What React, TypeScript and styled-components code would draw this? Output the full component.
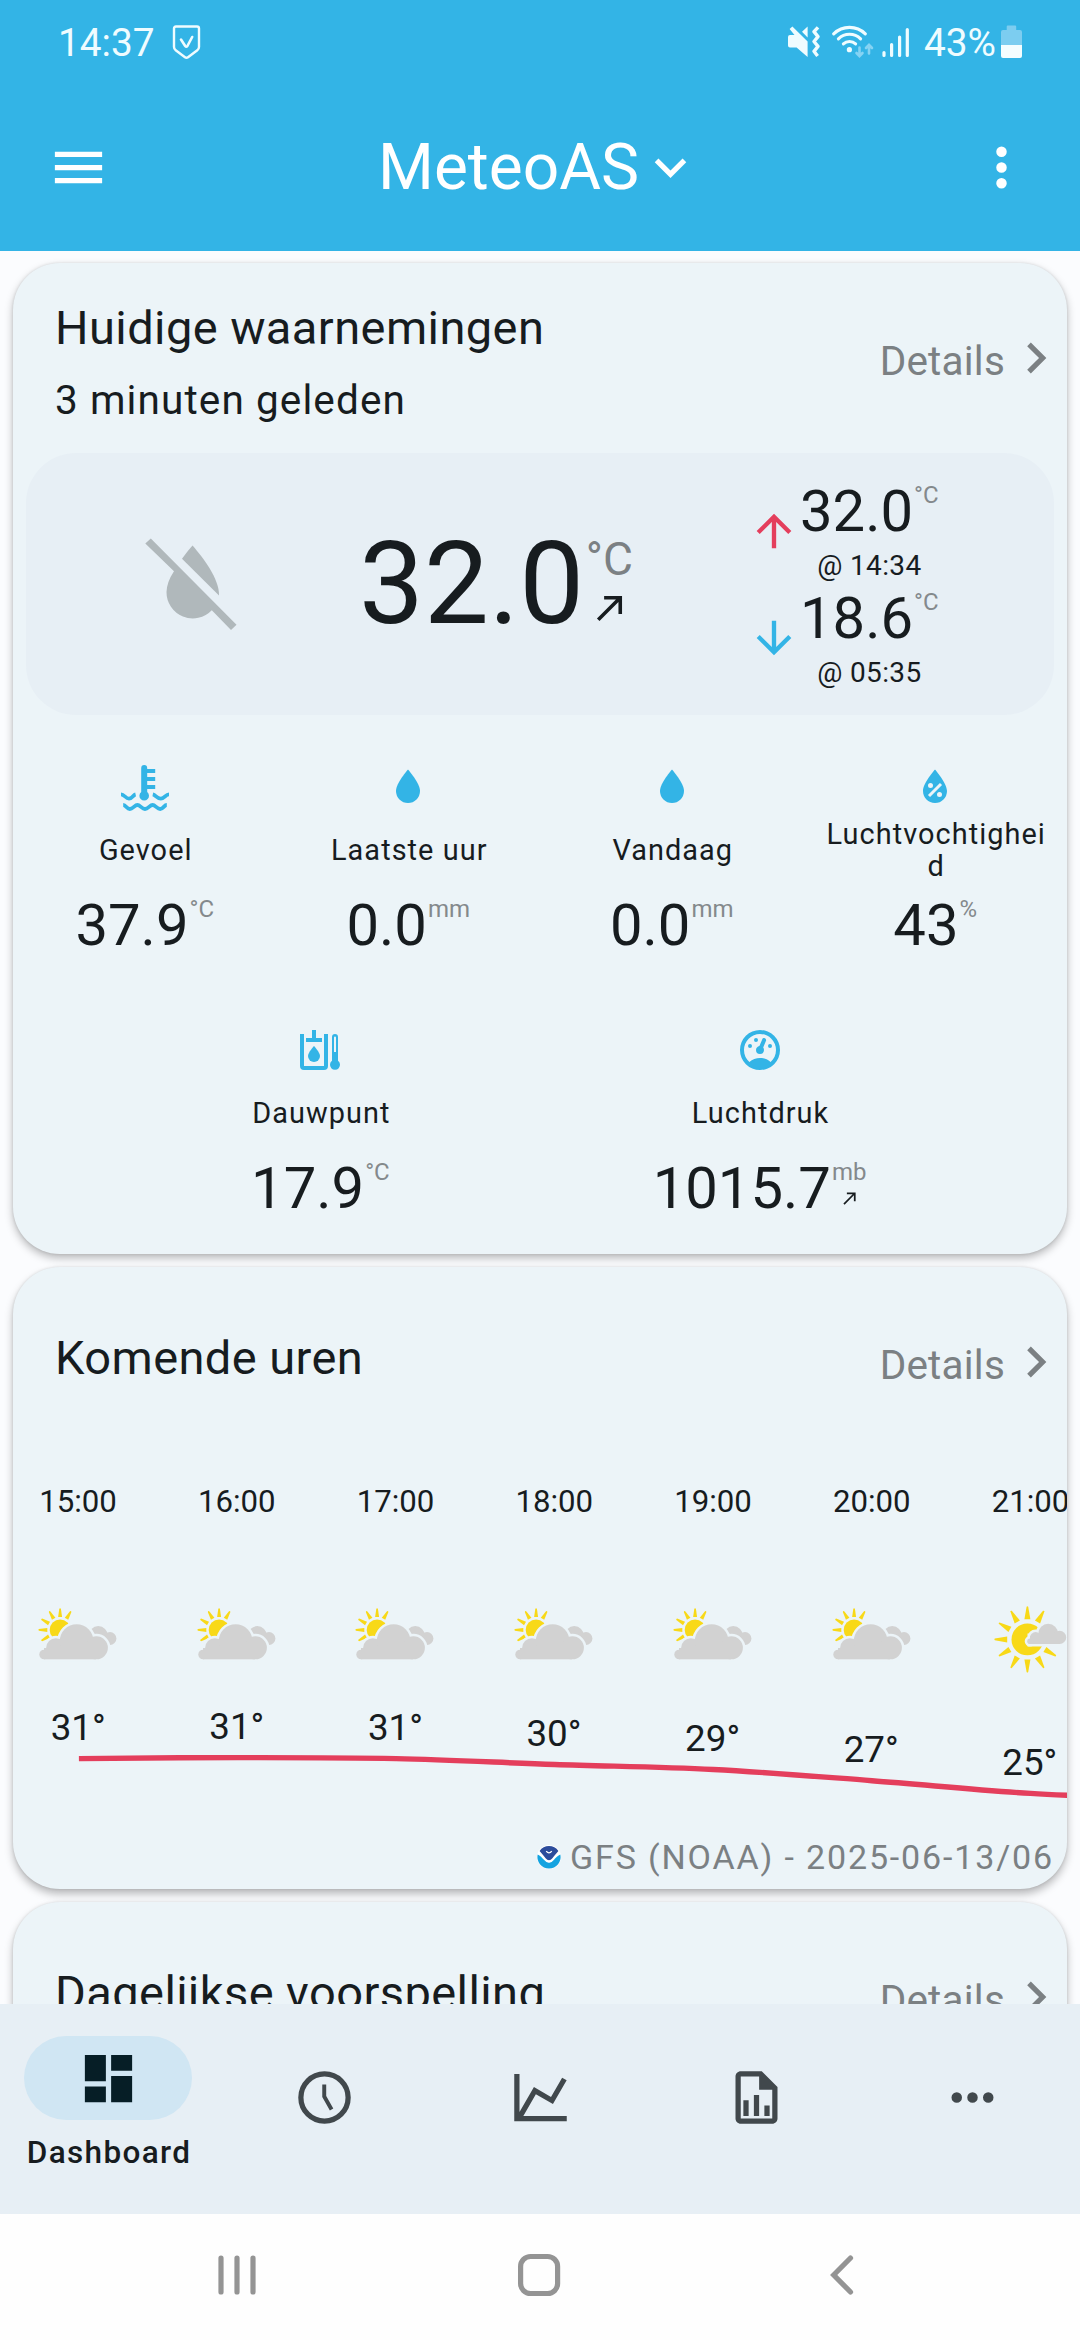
import React from "react";
import styled, { createGlobalStyle } from "styled-components";

const c = {
  primary: "#33b4e6",
  page: "#fbfcfe",
  card: "#ecf4f8",
  panel: "#e7eff5",
  text: "#171c1f",
  muted: "#7b8083",
  max: "#e43e5c",
  yellow: "#f8d918",
  cloud: "#d2d2d2",
  nav: "#41484c",
  sys: "#949494",
};

const Global = createGlobalStyle`
  * { box-sizing: border-box; }
  html, body { margin: 0; padding: 0; }
  body { font-family: Roboto, "Noto Sans", sans-serif; color: ${c.text}; background: ${c.page}; }
  svg { display: block; flex: none; }
`;

const Screen = styled.div`
  width: 1080px;
  height: 2340px;
  display: flex;
  flex-direction: column;
  overflow: hidden;
  background: ${c.page};
`;

const StatusBar = styled.div`
  height: 84px;
  flex: none;
  display: flex;
  justify-content: space-between;
  align-items: center;
  padding: 0 58px 0 58px;
  background: ${c.primary};
  color: #effcff;
`;

const StatusGroup = styled.div<{ $gap?: number; $before?: number }>`
  display: flex;
  align-items: center;
  gap: ${(p) => p.$gap ?? 0}px;
  margin-left: ${(p) => p.$before ?? 0}px;
`;

const StatusText = styled.span`
  font-size: 38.8px;
  line-height: 46px;
  padding-top: 2px;
`;

const AppBar = styled.header`
  height: 167px;
  flex: none;
  display: flex;
  justify-content: space-between;
  align-items: center;
  padding: 0 47px;
  background: ${c.primary};
  color: #fff;
`;

const AppTitle = styled.div`
  display: flex;
  align-items: center;
  font-size: 64px;
  line-height: 76px;
`;

const Content = styled.main`
  flex: 1;
  min-height: 0;
  overflow: hidden;
  display: flex;
  flex-direction: column;
  gap: 13px;
  padding: 12px 13px 0;
`;

const Card = styled.section<{ $h: number; $depth: number }>`
  height: ${(p) => p.$h}px;
  flex: none;
  display: flex;
  flex-direction: column;
  border-radius: 47px;
  background: ${c.card};
  box-shadow: 0 0 3px rgba(0, 0, 0, 0.11), 0 ${(p) => p.$depth}px 9px rgba(0, 0, 0, 0.27);
`;

const CardHeader = styled.div`
  height: 190px;
  flex: none;
  display: flex;
  justify-content: space-between;
  align-items: center;
  padding: 0 0 0 42px;
`;

const Titles = styled.div<{ $shift: number }>`
  display: flex;
  flex-direction: column;
  gap: 15px;
  padding-top: ${(p) => Math.max(p.$shift, 0)}px;
  padding-bottom: ${(p) => Math.max(-p.$shift, 0)}px;
`;

const Title = styled.h2`
  margin: 0;
  font-size: 47px;
  font-weight: 400;
  line-height: 60px;
  letter-spacing: 0.42px;
`;

const Subtitle = styled.div`
  font-size: 40.5px;
  line-height: 54px;
  letter-spacing: 1.1px;
`;

const Details = styled.div`
  display: flex;
  align-items: center;
  color: ${c.muted};
`;

const DetailsText = styled.span`
  font-size: 40.5px;
  line-height: 48px;
  letter-spacing: 0.2px;
  padding-top: 5px;
`;

const Panel = styled.div`
  height: 262px;
  flex: none;
  margin: 0 13px;
  border-radius: 50px;
  background: ${c.panel};
  display: grid;
  grid-template-columns: 330px 392px 1fr;
  align-items: center;
`;

const PanelIcon = styled.div`
  display: flex;
  justify-content: center;
`;

const Reading = styled.div`
  display: flex;
  align-items: flex-start;
`;

const BigNumber = styled.span`
  font-size: 115.5px;
  line-height: 136px;
  padding-left: 3px;
`;

const BigUnit = styled.div`
  display: flex;
  flex-direction: column;
  align-items: center;
  padding: 16px 0 0 1.5px;
  font-size: 46px;
  line-height: 55px;
  color: ${c.muted};
`;

const Extremes = styled.div`
  display: flex;
  flex-direction: column;
`;

const Extreme = styled.div`
  height: 107px;
  display: flex;
  align-items: center;
`;

const ExtremeBody = styled.div`
  display: flex;
  flex-direction: column;
  align-items: center;
`;

const At = styled.div`
  font-size: 28px;
  line-height: 37px;
  padding-top: 2px;
  letter-spacing: 0.35px;
`;

const Number = styled.span`
  font-size: 58px;
  line-height: 68px;
`;

const Unit = styled.span`
  display: flex;
  flex-direction: column;
  align-items: center;
  gap: 2px;
  padding: 4px 0 0 1px;
  font-size: 24px;
  line-height: 28px;
  color: #84898c;
`;

const MetricRow = styled.div`
  height: 263px;
  flex: none;
  display: flex;
  justify-content: space-evenly;
`;

const Metric = styled.div`
  width: 263.5px;
  display: flex;
  flex-direction: column;
  align-items: center;
  padding-top: 48px;
`;

const MetricLabel = styled.div`
  width: 226px;
  height: 64px;
  margin: 7px 0 9px;
  padding-left: 2px;
  display: flex;
  align-items: center;
  justify-content: center;
  text-align: center;
  word-break: break-all;
  font-size: 28.9px;
  line-height: 32px;
  letter-spacing: 1.05px;
`;

const Hourly = styled.div`
  flex: 1;
  display: flex;
  flex-direction: column;
  overflow: hidden;
`;

const HourRow = styled.div`
  display: flex;
  margin-left: -14.4px;
`;

const Hour = styled.div`
  width: 158.75px;
  flex: none;
  display: flex;
  flex-direction: column;
  align-items: center;
  padding-top: 26px;
`;

const HourTime = styled.div`
  font-size: 31.2px;
  line-height: 38px;
  margin-bottom: 77px;
`;

const Source = styled.div`
  display: flex;
  justify-content: flex-end;
  align-items: center;
  gap: 9px;
  padding-right: 13px;
  margin-top: 22px;
  color: ${c.muted};
  font-size: 34px;
  line-height: 42px;
  letter-spacing: 1.85px;
`;

const BottomNav = styled.nav`
  height: 210px;
  flex: none;
  display: grid;
  grid-template-columns: repeat(5, 1fr);
  background: ${c.panel};
  color: ${c.nav};
`;

const NavItem = styled.div<{ $active?: boolean }>`
  display: flex;
  flex-direction: column;
  align-items: center;
  padding-top: ${(p) => (p.$active ? 32 : 61.5)}px;
`;

const Pill = styled.div`
  width: 168px;
  height: 84px;
  display: flex;
  align-items: center;
  justify-content: center;
  border-radius: 42px;
  background: #d0e6f3;
  color: #061e26;
`;

const NavLabel = styled.div`
  margin-top: 12.5px;
  padding-left: 2px;
  font-size: 31.5px;
  font-weight: 500;
  line-height: 40px;
  letter-spacing: 1.35px;
  color: ${c.text};
`;

const SystemNav = styled.div`
  height: 126px;
  flex: none;
  display: flex;
  align-items: center;
  justify-content: space-between;
  padding: 0 224px 4px 216px;
  background: #fefefe;
`;

const Icon = ({ d, size, color = "currentColor" }: { d: string; size: number; color?: string }) => (
  <svg width={size} height={size} viewBox="0 0 24 24" fill={color}>
    <path d={d} />
  </svg>
);

const p = {
  menu: "M3,6H21V8H3V6M3,11H21V13H3V11M3,16H21V18H3V16Z",
  down: "M7.41,8.58L12,13.17L16.59,8.58L18,10L12,16L6,10L7.41,8.58Z",
  right: "M8.59,16.58L13.17,12L8.59,7.41L10,6L16,12L10,18L8.59,16.58Z",
  more: "M12,16A2,2 0 0,1 14,18A2,2 0 0,1 12,20A2,2 0 0,1 10,18A2,2 0 0,1 12,16M12,10A2,2 0 0,1 14,12A2,2 0 0,1 12,14A2,2 0 0,1 10,12A2,2 0 0,1 12,10M12,4A2,2 0 0,1 14,6A2,2 0 0,1 12,8A2,2 0 0,1 10,6A2,2 0 0,1 12,4Z",
  moreH: "M16,12A2,2 0 0,1 18,10A2,2 0 0,1 20,12A2,2 0 0,1 18,14A2,2 0 0,1 16,12M10,12A2,2 0 0,1 12,10A2,2 0 0,1 14,12A2,2 0 0,1 12,14A2,2 0 0,1 10,12M4,12A2,2 0 0,1 6,10A2,2 0 0,1 8,12A2,2 0 0,1 6,14A2,2 0 0,1 4,12Z",
  rising: "M5,17.59L15.59,7H9V5H19V15H17V8.41L6.41,19L5,17.59Z",
  up: "M4 12l1.41 1.41L11 7.83V20h2V7.83l5.58 5.59L20 12l-8-8-8 8z",
  downArrow: "M20 12l-1.41-1.41L13 16.17V4h-2v12.17l-5.58-5.59L4 12l8 8 8-8z",
  drop: "M12,20A6,6 0 0,1 6,14C6,10 12,3.25 12,3.25C12,3.25 18,10 18,14A6,6 0 0,1 12,20Z",
  humidity:
    "M12,3.25C12,3.25 6,10 6,14C6,17.32 8.69,20 12,20A6,6 0 0,0 18,14C18,10 12,3.25 12,3.25M14.47,9.97L15.53,11.03L9.53,17.03L8.47,15.97M9.75,10A1.25,1.25 0 0,1 11,11.25A1.25,1.25 0 0,1 9.75,12.5A1.25,1.25 0 0,1 8.5,11.25A1.25,1.25 0 0,1 9.75,10M14.25,14.5A1.25,1.25 0 0,1 15.5,15.75A1.25,1.25 0 0,1 14.25,17A1.25,1.25 0 0,1 13,15.75A1.25,1.25 0 0,1 14.25,14.5Z",
  gauge:
    "M17.3,18C19,16.5 20,14.4 20,12A8,8 0 0,0 12,4A8,8 0 0,0 4,12C4,14.4 5,16.5 6.7,18C8.2,16.7 10,16 12,16C14,16 15.9,16.7 17.3,18M12,2A10,10 0 0,1 22,12A10,10 0 0,1 12,22A10,10 0 0,1 2,12A10,10 0 0,1 12,2M7,9A1,1 0 0,1 8,10A1,1 0 0,1 7,11A1,1 0 0,1 6,10A1,1 0 0,1 7,9M10,6A1,1 0 0,1 11,7A1,1 0 0,1 10,8A1,1 0 0,1 9,7A1,1 0 0,1 10,6M17,9A1,1 0 0,1 18,10A1,1 0 0,1 17,11A1,1 0 0,1 16,10A1,1 0 0,1 17,9M14.4,6.1C14.9,6.3 15.2,6.9 15,7.4L13.6,10.8C13.8,11.1 14,11.5 14,12A2,2 0 0,1 12,14A2,2 0 0,1 10,12C10,11 10.7,10.2 11.7,10L13.1,6.7C13.3,6.1 13.9,5.9 14.4,6.1Z",
  dashboard: "M13,3V9H21V3M13,21H21V11H13M3,21H11V15H3M3,13H11V3H3V13Z",
  chart:
    "M16,11.78L20.24,4.45L21.97,5.45L16.74,14.5L10.23,10.75L5.46,19H22V21H2V3H4V17.54L9.5,8L16,11.78Z",
  report:
    "M14 2H6C4.89 2 4 2.9 4 4V20C4 21.11 4.89 22 6 22H18C19.11 22 20 21.11 20 20V8L14 2M18 20H6V4H13V9H18V20M9 13V19H7V13H9M15 15V19H17V15H15M11 11V19H13V11H11Z",
};

const ShieldIcon = () => (
  <svg width="29" height="36" viewBox="0 0 29 36" fill="none" stroke="#effcff" strokeLinecap="round" strokeLinejoin="round">
    <path d="M4 2.5H25Q27 2.5 27 4.5V23Q27 25 25.3 26.3L16 33.3Q14.5 34.4 13 33.3L3.7 26.3Q2 25 2 23V4.5Q2 2.5 4 2.5Z" strokeWidth="2.4" />
    <path d="M9 15.5L13.2 22Q14.3 23.4 15.4 22L20.2 13" strokeWidth="2.6" />
  </svg>
);

const MuteIcon = () => (
  <svg width="32" height="34" viewBox="0 0 32 34" fill="#effcff">
    <path d="M0 12Q0 10 2 10H6.5L1.6 4L4.4 1.6L19.6 16.5V32L8.6 22.5H2Q0 22.5 0 20.5Z" />
    <path d="M19.6 1.5V12.6L14 6.8Z" />
    <path d="M30 2.3L26 6.7L30 11.6L26 16.5L30 21.4L26 26.3L29.6 31" fill="none" stroke="#effcff" strokeWidth="3.4" strokeLinejoin="round" />
  </svg>
);

const WifiIcon = () => (
  <svg width="42" height="34" viewBox="0 0 42 34" fill="none" stroke="#effcff" strokeWidth="3.1" strokeLinecap="round">
    <path d="M1.7 8.8A22.6 22.6 0 0 1 33.3 8.8" />
    <path d="M6.4 13.8A15.8 15.8 0 0 1 28.6 13.8" />
    <path d="M11.4 18.9A8.8 8.8 0 0 1 23.6 18.9" />
    <circle cx="17.4" cy="24.7" r="2.6" fill="#effcff" stroke="none" />
    <g stroke="#86d3f3" strokeWidth="2.6">
      <path d="M27.5 22.5V31M24.5 28L27.5 31.2L30.5 28" />
      <path d="M37 28.5V20M34 23L37 19.8L40 23" />
    </g>
  </svg>
);

const SignalIcon = () => (
  <svg width="28" height="34" viewBox="0 0 28 34" stroke="#effcff" strokeWidth="3.2" strokeLinecap="round">
    <path d="M2 27.5V30.5M9.6 19.5V30.5M17.6 12V30.5M25.3 4.5V30.5" />
  </svg>
);

const BatteryIcon = () => (
  <svg width="21" height="34" viewBox="0 0 21 34">
    <path d="M5.7 1.5Q5.7 0.5 6.7 0.5H14.2Q15.2 0.5 15.2 1.5V5H19Q21 5 21 7V20H0V7Q0 5 2 5H5.7Z" fill="#7ccdf0" />
    <path d="M0 20H21V31Q21 33 19 33H2Q0 33 0 31Z" fill="#f4fdff" />
  </svg>
);

const DryIcon = () => (
  <svg width="92" height="92" viewBox="0 0 92 92" fill="#b0b8bb">
    <path d="M5.8 0.5L91.5 86.8L86 92L66.8 72.3A26.3 26.3 0 0 1 21.5 54Q21.8 44 29 33.2L0.3 5.6Z" />
    <path d="M47.5 7.5C58 19.5 74.5 41 74 57.5L37 20.7Q41.5 14.3 47.5 7.5Z" />
  </svg>
);

const FeelsLikeIcon = () => (
  <svg width="48" height="48" viewBox="0 0 24 24" fill={c.primary}>
    <path d="M10.1 2.6Q10.1 1 11.6 1T13.1 2.6V3H17.1V5H13.1V7H17.1V9H13.1V11H17.1V13H13.1V14.5A2.4 2.4 0 1 1 10.1 14.5Z" />
    <g fill="none" stroke={c.primary} strokeWidth="1.9">
      <path d="M0 15.7C1.8 15.7 2.2 17.8 4 17.8S6 16 7.3 15.7" />
      <path d="M15.9 15.7C17.4 16 17.9 17.8 19.9 17.8S22.2 15.7 24 15.7" />
      <path d="M1.1 21C2.5 21 2.9 23 4.4 23S6.9 21 8.2 21S10.5 23 12 23S14.5 21 15.8 21S18.1 23 19.6 23S21.6 21 22.9 21" />
    </g>
  </svg>
);

const DewPointIcon = () => (
  <svg width="48" height="48" viewBox="0 0 24 24" fill={c.primary}>
    <path d="M2 4H4V20H14V4H16V20Q16 22 14 22H4Q2 22 2 20Z" />
    <path d="M8 2H10V6H13V8H5V6H8Z" />
    <path d="M9 10C9 10 6 13.2 6 15A3 3 0 0 0 12 15C12 13.2 9 10 9 10Z" />
    <path fillRule="evenodd" d="M18 5.5A1.5 1.5 0 0 1 21 5.5V17.4A2.5 2.5 0 1 1 18 17.4ZM19 5.8V13H20V5.8Q20 5.3 19.5 5.3T19 5.8Z" />
  </svg>
);

const Rays = ({ cx, cy, inner, outer, w, angles }: { cx: number; cy: number; inner: number; outer: number; w: number; angles: number[] }) => (
  <g fill={c.yellow} transform={`translate(${cx} ${cy})`}>
    {angles.map((a) => (
      <path key={a} transform={`rotate(${a})`} d={`M${-w} ${-inner}L-0.8 ${-outer}Q0 ${-outer - 1} 0.8 ${-outer}L${w} ${-inner}Z`} />
    ))}
  </g>
);

const MostlyCloudy = () => (
  <svg width="84" height="84" viewBox="0 0 84 84">
    <Rays cx={24.1} cy={31.9} inner={12.8} outer={21.2} w={2} angles={[-120, -90, -60, -30, 0, 30]} />
    <circle cx="24.1" cy="31.9" r="10.4" fill={c.yellow} />
    <g fill={c.cloud}>
      <circle cx="62.3" cy="37.7" r="9.6" />
      <circle cx="74" cy="40.5" r="6.4" />
    </g>
    {[c.card, c.cloud].map((tone) => (
      <g key={tone} fill={tone} stroke={c.card} strokeWidth={tone === c.card ? 5 : 0}>
        <circle cx="8.1" cy="56.5" r="4.8" />
        <circle cx="19.9" cy="50" r="9.8" />
        <circle cx="40.6" cy="43.2" r="16.9" />
        <circle cx="60.4" cy="49.8" r="11.5" />
        <rect x="8" y="50" width="52" height="11.3" />
      </g>
    ))}
  </svg>
);

const MostlySunny = () => (
  <svg width="84" height="84" viewBox="0 0 84 84">
    <Rays cx={39.4} cy={41.4} inner={20.2} outer={32.6} w={3} angles={[0, 30, 120, 150, 180, 210, 240, 270, 300, 330]} />
    <circle cx="39.4" cy="41.4" r="15.9" fill={c.yellow} />
    {[c.card, c.cloud].map((tone) => (
      <g key={tone} fill={tone} stroke={c.card} strokeWidth={tone === c.card ? 5 : 0}>
        <circle cx="42" cy="43.2" r="2.8" />
        <circle cx="47.6" cy="39.6" r="5.6" />
        <circle cx="60.2" cy="35.7" r="9.9" />
        <circle cx="71.6" cy="39.4" r="6.6" />
        <rect x="42" y="38" width="30" height="8" />
      </g>
    ))}
  </svg>
);

const NoaaLogo = () => (
  <svg width="24" height="24" viewBox="0 0 24 24">
    <circle cx="12" cy="12" r="12" fill="#fff" />
    <path d="M2.6 6A11.4 11.4 0 0 1 21.4 6C19 8.6 17.2 11 15.4 13.2Q13.8 15.2 12 15.2T8.6 13.2C6.8 11 5 8.6 2.6 6Z" fill="#2b4b9b" />
    <path d="M0.7 9.4C3 10.4 5.2 12.6 7.2 15.1Q9.5 17.9 12 17.7Q14.6 17.9 16.8 15.1C18.8 12.4 21 10.4 23.3 9.4A11.6 11.6 0 1 1 0.7 9.4Z" fill="#14a3e0" />
    <path d="M9.2 6.2Q12 9.6 14.8 6.2" fill="none" stroke="#fff" strokeWidth="1.2" />
  </svg>
);

const ClockIcon = () => (
  <svg width="63" height="63" viewBox="0 0 24 24" fill="none" stroke="currentColor">
    <circle cx="12" cy="12" r="9" strokeWidth="2" />
    <path d="M11.9 7V11.6L14.7 16.6" strokeWidth="1.5" />
  </svg>
);

const hours = [
  { time: "15:00", temp: 31, y: 76.6 },
  { time: "16:00", temp: 31, y: 75.6 },
  { time: "17:00", temp: 31, y: 76.6 },
  { time: "18:00", temp: 30, y: 82.5 },
  { time: "19:00", temp: 29, y: 87.5 },
  { time: "20:00", temp: 27, y: 98.7 },
  { time: "21:00", temp: 25, y: 111.4 },
];

const STEP = 158.6;
const X0 = 65.9;

const TemperatureChart = () => {
  const pts = [...hours.map((h, i) => [X0 + i * STEP, h.y]), [X0 + 7 * STEP, 118]];
  let d = `M${pts[0][0]} ${pts[0][1]}`;
  for (let i = 0; i < pts.length - 1; i++) {
    const a = pts[Math.max(i - 1, 0)];
    const b = pts[i];
    const e = pts[i + 1];
    const f = pts[Math.min(i + 2, pts.length - 1)];
    d += `C${b[0] + (e[0] - a[0]) / 6} ${b[1] + (e[1] - a[1]) / 6} ${e[0] - (f[0] - b[0]) / 6} ${e[1] - (f[1] - b[1]) / 6} ${e[0]} ${e[1]}`;
  }
  return (
    <svg width="1054" height="132" viewBox="0 0 1054 132" fontFamily="Roboto, sans-serif" fontSize="36.75">
      {hours.map((h, i) => (
        <text key={h.time} x={X0 + i * STEP - 0.7} y={h.y - 18.5} textAnchor="middle" fill={c.text}>
          {h.temp}°
        </text>
      ))}
      <path d={d} fill="none" stroke={c.max} strokeWidth="5.4" />
    </svg>
  );
};

const DetailsLink = () => (
  <Details>
    <DetailsText>Details</DetailsText>
    <Icon d={p.right} size={62} />
  </Details>
);

const metrics = [
  [
    { icon: <FeelsLikeIcon />, label: "Gevoel", value: "37.9", unit: "°C" },
    { icon: <Icon d={p.drop} size={48} color={c.primary} />, label: "Laatste uur", value: "0.0", unit: "mm" },
    { icon: <Icon d={p.drop} size={48} color={c.primary} />, label: "Vandaag", value: "0.0", unit: "mm" },
    { icon: <Icon d={p.humidity} size={48} color={c.primary} />, label: "Luchtvochtigheid", value: "43", unit: "%" },
  ],
  [
    { icon: <DewPointIcon />, label: "Dauwpunt", value: "17.9", unit: "°C" },
    { icon: <Icon d={p.gauge} size={48} color={c.primary} />, label: "Luchtdruk", value: "1015.7", unit: "mb", rising: true },
  ],
];

export default function App() {
  return (
    <Screen>
      <Global />
      <StatusBar>
        <StatusGroup $gap={17}>
          <StatusText>14:37</StatusText>
          <ShieldIcon />
        </StatusGroup>
        <StatusGroup>
          <MuteIcon />
          <StatusGroup $before={12} $gap={8}>
            <WifiIcon />
            <SignalIcon />
          </StatusGroup>
          <StatusGroup $before={14} $gap={5}>
            <StatusText>43%</StatusText>
            <BatteryIcon />
          </StatusGroup>
        </StatusGroup>
      </StatusBar>
      <AppBar>
        <Icon d={p.menu} size={63} />
        <AppTitle>
          MeteoAS
          <Icon d={p.down} size={63} />
        </AppTitle>
        <Icon d={p.more} size={63} />
      </AppBar>
      <Content>
        <Card $h={991} $depth={4}>
          <CardHeader>
            <Titles $shift={9}>
              <Title>Huidige waarnemingen</Title>
              <Subtitle>3 minuten geleden</Subtitle>
            </Titles>
            <DetailsLink />
          </CardHeader>
          <Panel>
            <PanelIcon>
              <DryIcon />
            </PanelIcon>
            <Reading>
              <BigNumber>32.0</BigNumber>
              <BigUnit>
                °C
                <Icon d={p.rising} size={43} color={c.text} />
              </BigUnit>
            </Reading>
            <Extremes>
              <Extreme>
                <Icon d={p.up} size={52} color={c.max} />
                <ExtremeBody>
                  <Reading>
                    <Number>32.0</Number>
                    <Unit>°C</Unit>
                  </Reading>
                  <At>@ 14:34</At>
                </ExtremeBody>
              </Extreme>
              <Extreme>
                <Icon d={p.downArrow} size={52} color={c.primary} />
                <ExtremeBody>
                  <Reading>
                    <Number>18.6</Number>
                    <Unit>°C</Unit>
                  </Reading>
                  <At>@ 05:35</At>
                </ExtremeBody>
              </Extreme>
            </Extremes>
          </Panel>
          {metrics.map((row, i) => (
            <MetricRow key={i}>
              {row.map((m: any) => (
                <Metric key={m.label}>
                  {m.icon}
                  <MetricLabel>{m.label}</MetricLabel>
                  <Reading>
                    <Number>{m.value}</Number>
                    <Unit>
                      {m.unit}
                      {m.rising && <Icon d={p.rising} size={21} color={c.text} />}
                    </Unit>
                  </Reading>
                </Metric>
              ))}
            </MetricRow>
          ))}
        </Card>
        <Card $h={622} $depth={5}>
          <CardHeader>
            <Titles $shift={-8}>
              <Title>Komende uren</Title>
            </Titles>
            <DetailsLink />
          </CardHeader>
          <Hourly>
            <HourRow>
              {hours.map((h, i) => (
                <Hour key={h.time}>
                  <HourTime>{h.time}</HourTime>
                  {i === 6 ? <MostlySunny /> : <MostlyCloudy />}
                </Hour>
              ))}
            </HourRow>
            <TemperatureChart />
            <Source>
              <NoaaLogo />
              GFS (NOAA) - 2025-06-13/06
            </Source>
          </Hourly>
        </Card>
        <Card $h={600} $depth={5}>
          <CardHeader>
            <Titles $shift={-8}>
              <Title>Dagelijkse voorspelling</Title>
            </Titles>
            <DetailsLink />
          </CardHeader>
        </Card>
      </Content>
      <BottomNav>
        <NavItem $active>
          <Pill>
            <Icon d={p.dashboard} size={63} />
          </Pill>
          <NavLabel>Dashboard</NavLabel>
        </NavItem>
        <NavItem>
          <ClockIcon />
        </NavItem>
        <NavItem>
          <Icon d={p.chart} size={63} />
        </NavItem>
        <NavItem>
          <Icon d={p.report} size={63} />
        </NavItem>
        <NavItem>
          <Icon d={p.moreH} size={63} />
        </NavItem>
      </BottomNav>
      <SystemNav>
        <svg width="42" height="46" viewBox="0 0 42 46" stroke={c.sys} strokeWidth="5.2" strokeLinecap="round">
          <path d="M5 6V40M21 6V40M37 6V40" />
        </svg>
        <svg width="44" height="46" viewBox="0 0 44 46" fill="none" stroke={c.sys} strokeWidth="5.2">
          <rect x="3.6" y="4.5" width="37" height="37" rx="10" />
        </svg>
        <svg width="36" height="46" viewBox="0 0 36 46" fill="none" stroke={c.sys} strokeWidth="5.2" strokeLinecap="round">
          <path d="M30.5 6L13.7 23L30.5 40" />
        </svg>
      </SystemNav>
    </Screen>
  );
}
